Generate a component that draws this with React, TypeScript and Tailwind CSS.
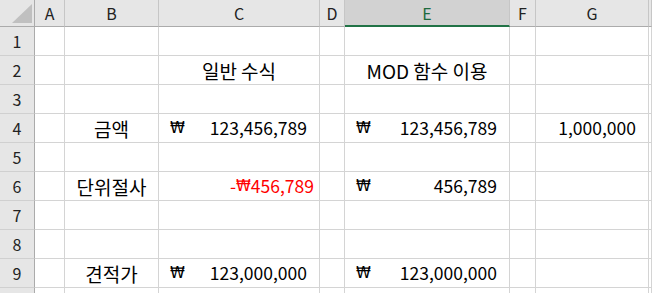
import React from 'react'

type Cell =
  | { kind: 'text'; value: React.ReactNode; align?: 'center' | 'right'; red?: boolean; pr?: string }
  | { kind: 'won'; value: string }
  | null

const cols = ['A', 'B', 'C', 'D', 'E', 'F', 'G', 'H']

// widths include the 1px right gridline of each column
const colWidths = 'grid-cols-[35px_30px_94px_161px_25px_165px_26px_113px_1fr]'

const Won = () => <span className="font-['DejaVu_Sans',sans-serif] text-[15px]">₩</span>
const Ko = ({ children }: { children: React.ReactNode }) => <span className="text-[19px]">{children}</span>

const data: Record<number, Cell[]> = {
  2: [
    null,
    null,
    { kind: 'text', value: <Ko>일반 수식</Ko>, align: 'center' },
    null,
    { kind: 'text', value: <Ko>MOD 함수 이용</Ko>, align: 'center' },
    null,
    null,
    null,
  ],
  4: [
    null,
    { kind: 'text', value: <Ko>금액</Ko>, align: 'center' },
    { kind: 'won', value: '123,456,789' },
    null,
    { kind: 'won', value: '123,456,789' },
    null,
    { kind: 'text', value: '1,000,000', align: 'right', pr: 'pr-[12px]' },
    null,
  ],
  6: [
    null,
    { kind: 'text', value: <Ko>단위절사</Ko>, align: 'center' },
    { kind: 'text', value: <>-<Won />456,789</>, align: 'right', red: true, pr: 'pr-[5px]' },
    null,
    { kind: 'won', value: '456,789' },
    null,
    null,
    null,
  ],
  9: [
    null,
    { kind: 'text', value: <Ko>견적가</Ko>, align: 'center' },
    { kind: 'won', value: '123,000,000' },
    null,
    { kind: 'won', value: '123,000,000' },
    null,
    null,
    null,
  ],
}

function CellContent({ cell }: { cell: Cell }) {
  if (!cell) return null
  if (cell.kind === 'won') {
    return (
      <div className="flex w-full items-center justify-between pl-[11px] pr-[12px]">
        <Won />
        <span>{cell.value}</span>
      </div>
    )
  }
  return (
    <div
      className={`flex w-full items-center whitespace-pre ${cell.align === 'center' ? 'justify-center' : 'justify-end'} ${cell.pr ?? ''} ${cell.red ? 'text-[#ff0000]' : ''}`}
    >
      {cell.value}
    </div>
  )
}

export default function App() {
  const rows = [1, 2, 3, 4, 5, 6, 7, 8, 9, 10]
  return (
    <div className="h-[293px] w-[652px] overflow-hidden bg-white font-['Noto_Sans_CJK_KR','Noto_Sans',sans-serif] text-[#000] leading-none">
      {/* column header row */}
      <div className={`grid ${colWidths} h-[27px]`}>
        <div className="relative border-r border-b border-[#ababab] bg-[#e6e6e6]">
          <div className="absolute left-[12px] top-[4px] h-[19px] w-[20px] bg-[#c0c0c0] [clip-path:polygon(100%_0,100%_100%,0_100%)]" />
        </div>
        {cols.map((c) => (
          <div
            key={c}
            className={`flex items-center justify-center border-r border-r-[#c6c6c6] text-[16px] ${
              c === 'E'
                ? 'border-b-2 border-b-[#217346] bg-[#d2d2d2] text-[#1d6a3e]'
                : 'border-b border-b-[#ababab] bg-[#e6e6e6] text-[#222]'
            }`}
          >
            {c === 'H' ? '' : c}
          </div>
        ))}
      </div>

      {rows.map((r) => (
        <div key={r} className={`grid ${colWidths} h-[29px]`}>
          <div className="flex items-center justify-center border-r border-b border-r-[#ababab] border-b-[#d0d0d0] bg-[#e6e6e6] text-[16px] text-[#222]">
            {r < 10 ? r : ''}
          </div>
          {cols.map((c, i) => (
            <div
              key={c}
              className="flex items-center border-r border-b border-[#d4d4d4] text-[17.5px]"
            >
              <CellContent cell={data[r]?.[i] ?? null} />
            </div>
          ))}
        </div>
      ))}
    </div>
  )
}
